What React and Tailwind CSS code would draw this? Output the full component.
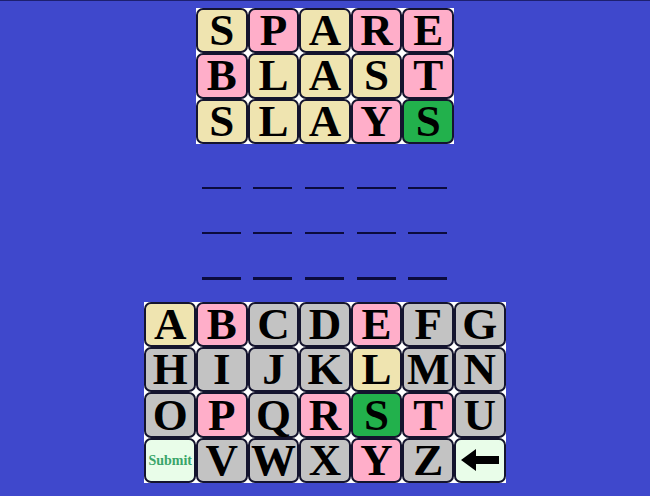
import React from 'react';

const COLORS = {
    y: 'bg-[#efe4b0]',
    p: 'bg-[#ffaec9]',
    g: 'bg-[#c3c3c3]',
    s: 'bg-[#22b14c]',
    w: 'bg-[#e9fde9]',
};

const guesses = [
    ['SPARE', 'ypypp'],
    ['BLAST', 'pyyyp'],
    ['SLAYS', 'yyyps'],
];

const keys = [
    ['A', 'y'], ['B', 'p'], ['C', 'g'], ['D', 'g'], ['E', 'p'], ['F', 'g'], ['G', 'g'],
    ['H', 'g'], ['I', 'g'], ['J', 'g'], ['K', 'g'], ['L', 'y'], ['M', 'g'], ['N', 'g'],
    ['O', 'g'], ['P', 'p'], ['Q', 'g'], ['R', 'p'], ['S', 's'], ['T', 'p'], ['U', 'g'],
    ['submit', 'w'], ['V', 'g'], ['W', 'g'], ['X', 'g'], ['Y', 'p'], ['Z', 'g'], ['back', 'w'],
];

const Tile = ({ color, children }) => (
    <div className="w-[51.6px] h-[45.3px] bg-white">
        <div
            className={`w-full h-full rounded-[7px] border-2 border-[#14142e] flex items-center justify-center ${COLORS[color]}`}
        >
            {children}
        </div>
    </div>
);

const Letter = ({ ch }) => (
    <span className="text-[45px] leading-[41px] font-bold text-black [font-family:'Liberation_Serif',serif]">
        {ch}
    </span>
);

const App = () => {
    return (
        <div className="w-[650px] h-[496px] bg-[#3f48cc] border-t border-[#1d2070] flex flex-col items-center pt-[7px] select-none">

            {/* Previous guesses */}
            <div className="grid grid-cols-5">
                {guesses.map(([word, marks]) =>
                    word.split('').map((ch, i) => (
                        <Tile key={word + i} color={marks[i]}>
                            <Letter ch={ch} />
                        </Tile>
                    ))
                )}
            </div>

            {/* Empty guess rows */}
            <div className="flex flex-col">
                {[0, 1, 2].map((r) => (
                    <div key={r} className="flex h-[45.3px] items-end">
                        {[0, 1, 2, 3, 4].map((c) => (
                            <div key={c} className="w-[51.6px] flex justify-center">
                                <div className="w-[39px] h-[2.5px] bg-[#0b0b3d] mr-[1px]" />
                            </div>
                        ))}
                    </div>
                ))}
            </div>

            {/* Keyboard */}
            <div className="grid grid-cols-7 mt-[22px]">
                {keys.map(([k, c]) => (
                    <Tile key={k} color={c}>
                        {k === 'submit' ? (
                            <span className="text-[14px] font-bold text-[#3aa56a] [font-family:'Liberation_Serif',serif]">
                                Submit
                            </span>
                        ) : k === 'back' ? (
                            <svg width="38" height="22" viewBox="0 0 38 22">
                                <path d="M0 11 L15 0 L15 7 L38 7 L38 15 L15 15 L15 22 Z" fill="#000" />
                            </svg>
                        ) : (
                            <Letter ch={k} />
                        )}
                    </Tile>
                ))}
            </div>
        </div>
    );
};

export default App;
